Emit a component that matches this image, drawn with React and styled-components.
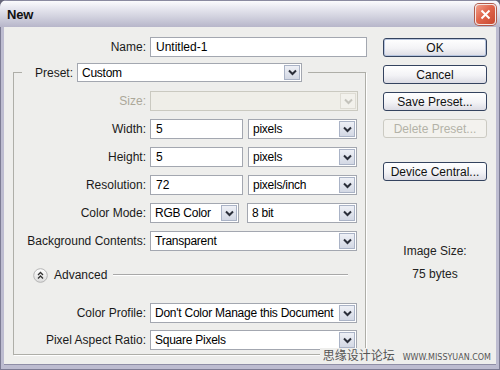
import React from 'react';
import styled, { createGlobalStyle, css } from 'styled-components';

const GlobalStyle = createGlobalStyle`
  html, body { margin: 0; padding: 0; background: #66667a; }
  body { font-family: 'Liberation Sans', Arial, sans-serif; font-size: 12px; color: #000; }
  * { box-sizing: border-box; }
`;

const Window = styled.div`
  position: relative;
  width: 500px;
  height: 370px;
  display: flex;
  flex-direction: column;
  border-radius: 7px 7px 0 0;
  overflow: hidden;
  background: #bdbcd0;
`;

const TitleBar = styled.div`
  height: 27px;
  flex: none;
  display: flex;
  align-items: center;
  justify-content: space-between;
  padding: 0 4px 0 7px;
  background: linear-gradient(#fbfbfd 0%, #e9e9f1 25%, #d2d2df 60%, #b7b6ca 100%);
  border-top: 1px solid #8a8aa0;
`;

const Title = styled.span`
  font-size: 13px;
  font-weight: bold;
  color: #111;
  letter-spacing: -0.2px;
`;

const CloseButton = styled.div`
  width: 21px;
  height: 21px;
  border-radius: 4px;
  border: 1px solid #f4e8e4;
  background: linear-gradient(135deg, #f0a08c 0%, #e0664c 45%, #c8492f 100%);
  display: flex;
  align-items: center;
  justify-content: center;
  box-shadow: 0 0 0 1px #b05a4a;
`;

const Frame = styled.div`
  flex: 1;
  display: flex;
  padding: 0 3px 5px 3px;
  border-left: 1px solid #7d7c94;
  border-right: 1px solid #7d7c94;
  border-bottom: 1px solid #7d7c94;
`;

const Client = styled.div`
  flex: 1;
  display: flex;
  padding-top: 10px;
  background: #eeeeec;
  box-shadow: 0 1px 0 #8f8ea6;
`;

const Main = styled.div`
  width: 366px;
  flex: none;
  display: flex;
  flex-direction: column;
`;

const NameRow = styled.div`
  display: flex;
  align-items: center;
  gap: 4px;
  height: 20px;
`;

const Label = styled.span`
  width: ${p => p.$w || 132}px;
  text-align: right;
  white-space: nowrap;
  color: ${p => (p.$disabled ? '#aca899' : '#1a1a1a')};
`;

const TextField = styled.div`
  width: ${p => p.$w}px;
  height: 20px;
  display: flex;
  align-items: center;
  padding-left: 5px;
  background: #fff;
  border: 1px solid #a3a7b0;
`;

const SelectBox = styled.div`
  width: ${p => p.$w}px;
  height: ${p => p.$h || 20}px;
  display: flex;
  align-items: center;
  background: ${p => (p.$disabled ? '#efeee8' : '#fff')};
  border: 1px solid ${p => (p.$disabled ? '#cac9c0' : '#a3a7b0')};
  padding: 1px;
`;

const SelectText = styled.span`
  flex: 1;
  padding-left: 3px;
  white-space: nowrap;
  overflow: hidden;
  letter-spacing: -0.25px;
`;

const ArrowBox = styled.div`
  width: 16px;
  height: 100%;
  flex: none;
  display: flex;
  align-items: center;
  justify-content: center;
  border: 1px solid ${p => (p.$disabled ? '#dedcd4' : '#aab3c6')};
  background: ${p => (p.$disabled ? '#f2f1ec' : 'linear-gradient(#eef0f6, #d3d8e4)')};
`;

const Group = styled.fieldset`
  margin: 6px 0 0 9px;
  padding: 9px 0 4px 0;
  width: 353px;
  min-width: 0;
  border: 1px solid #aeaea8;
  box-shadow: 1px 1px 0 #fff;
`;

const Legend = styled.legend`
  display: flex;
  align-items: center;
  gap: 5px;
  margin-left: 8px;
  padding: 0 6px 0 13px;
`;

const FieldGrid = styled.div`
  display: grid;
  grid-template-columns: 132px auto;
  column-gap: 4px;
  row-gap: ${p => p.$gap}px;
  align-items: center;
  margin-top: ${p => p.$mt || 0}px;
`;

const Controls = styled.div`
  display: flex;
  gap: ${p => p.$gap || 5}px;
`;

const AdvancedRow = styled.div`
  margin-top: 16px;
  height: 16px;
  display: flex;
  align-items: center;
  padding: 0 17px 0 19px;
`;

const AdvancedText = styled.span`
  margin-left: 6px;
  color: #1a1a1a;
`;

const Rule = styled.div`
  flex: 1;
  margin-left: 6px;
  height: 2px;
  border-top: 1px solid #a8a8a8;
  border-bottom: 1px solid #fff;
`;

const Side = styled.div`
  width: 104px;
  margin-left: 13px;
  padding-top: 1px;
  display: flex;
  flex-direction: column;
  gap: 8px;
`;

const Button = styled.button`
  width: 104px;
  height: 19px;
  padding: 0;
  font: 12px 'Liberation Sans', Arial, sans-serif;
  color: #111;
  border: 1px solid #34435f;
  border-radius: 3px;
  background: linear-gradient(#ffffff 0%, #f3f3f6 55%, #dcdce4 100%);
  margin-top: ${p => p.$mt || 0}px;
  ${p =>
    p.$primary &&
    css`
      box-shadow: inset 0 0 0 1px #b6c4de;
    `}
  &:disabled {
    color: #b3b2a8;
    border-color: #cbcac2;
    background: #f3f2ee;
  }
`;

const ImageSize = styled.div`
  margin-top: 55px;
  display: flex;
  flex-direction: column;
  align-items: center;
  gap: 9px;
  color: #222;
  line-height: 14px;
`;

const Watermark = styled.div`
  position: absolute;
  right: 9px;
  bottom: 8px;
  display: flex;
  align-items: baseline;
  gap: 8px;
  padding-left: 3px;
  background: #eeeeec;
  color: #555;
`;

const WatermarkCn = styled.span`
  font-family: 'Noto Sans CJK SC', sans-serif;
  font-size: 12px;
  line-height: 14px;
`;

const WatermarkUrl = styled.span`
  font-family: 'DejaVu Sans', sans-serif;
  font-size: 8px;
  letter-spacing: 0;
`;

const Chevron = ({ disabled }) => (
  <svg width="9" height="7" viewBox="0 0 9 7">
    <polyline
      points="1,1.5 4.5,5 8,1.5"
      fill="none"
      stroke={disabled ? '#c4c3bc' : '#2b2f3a'}
      strokeWidth="2"
    />
  </svg>
);

const Select = ({ w, value, disabled, h }) => (
  <SelectBox $w={w} $h={h} $disabled={disabled}>
    <SelectText>{value}</SelectText>
    <ArrowBox $disabled={disabled}>
      <Chevron disabled={disabled} />
    </ArrowBox>
  </SelectBox>
);

const AdvancedIcon = () => (
  <svg width="15" height="15" viewBox="0 0 15 15">
    <defs>
      <linearGradient id="adv" x1="0" y1="0" x2="0" y2="1">
        <stop offset="0" stopColor="#ffffff" />
        <stop offset="1" stopColor="#dcdcdc" />
      </linearGradient>
    </defs>
    <circle cx="7.5" cy="7.5" r="6.8" fill="url(#adv)" stroke="#b4b4b4" />
    <polyline points="5,7 7.5,4.5 10,7" fill="none" stroke="#333" strokeWidth="1.3" />
    <polyline points="5,10.5 7.5,8 10,10.5" fill="none" stroke="#333" strokeWidth="1.3" />
  </svg>
);

export default function App() {
  return (
    <>
      <GlobalStyle />
      <Window>
        <TitleBar>
          <Title>New</Title>
          <CloseButton>
            <svg width="11" height="11" viewBox="0 0 11 11">
              <path d="M1.5 1.5 L9.5 9.5 M9.5 1.5 L1.5 9.5" stroke="#fff" strokeWidth="2" />
            </svg>
          </CloseButton>
        </TitleBar>
        <Frame>
          <Client>
            <Main>
              <NameRow>
                <Label $w={142}>Name:</Label>
                <TextField $w={217}>Untitled-1</TextField>
              </NameRow>

              <Group>
                <Legend>
                  <Label $w={37}>Preset:</Label>
                  <Select w={225} h={19} value="Custom" />
                </Legend>

                <FieldGrid $gap={8}>
                  <Label $disabled>Size:</Label>
                  <Select w={208} value="" disabled />

                  <Label>Width:</Label>
                  <Controls>
                    <TextField $w={93}>5</TextField>
                    <Select w={109} value="pixels" />
                  </Controls>

                  <Label>Height:</Label>
                  <Controls>
                    <TextField $w={93}>5</TextField>
                    <Select w={109} value="pixels" />
                  </Controls>

                  <Label>Resolution:</Label>
                  <Controls>
                    <TextField $w={93}>72</TextField>
                    <Select w={109} value="pixels/inch" />
                  </Controls>

                  <Label>Color Mode:</Label>
                  <Controls $gap={8}>
                    <Select w={89} value="RGB Color" />
                    <Select w={110} value="8 bit" />
                  </Controls>

                  <Label>Background Contents:</Label>
                  <Select w={207} value="Transparent" />
                </FieldGrid>

                <AdvancedRow>
                  <AdvancedIcon />
                  <AdvancedText>Advanced</AdvancedText>
                  <Rule />
                </AdvancedRow>

                <FieldGrid $gap={7} $mt={20}>
                  <Label>Color Profile:</Label>
                  <Select w={207} value="Don't Color Manage this Document" />

                  <Label>Pixel Aspect Ratio:</Label>
                  <Select w={207} value="Square Pixels" />
                </FieldGrid>
              </Group>
            </Main>

            <Side>
              <Button $primary>OK</Button>
              <Button>Cancel</Button>
              <Button>Save Preset...</Button>
              <Button disabled>Delete Preset...</Button>
              <Button $mt={16}>Device Central...</Button>
              <ImageSize>
                <span>Image Size:</span>
                <span>75 bytes</span>
              </ImageSize>
            </Side>
          </Client>
        </Frame>
        <Watermark>
          <WatermarkCn>思缘设计论坛</WatermarkCn>
          <WatermarkUrl>WWW.MISSYUAN.COM</WatermarkUrl>
        </Watermark>
      </Window>
    </>
  );
}
